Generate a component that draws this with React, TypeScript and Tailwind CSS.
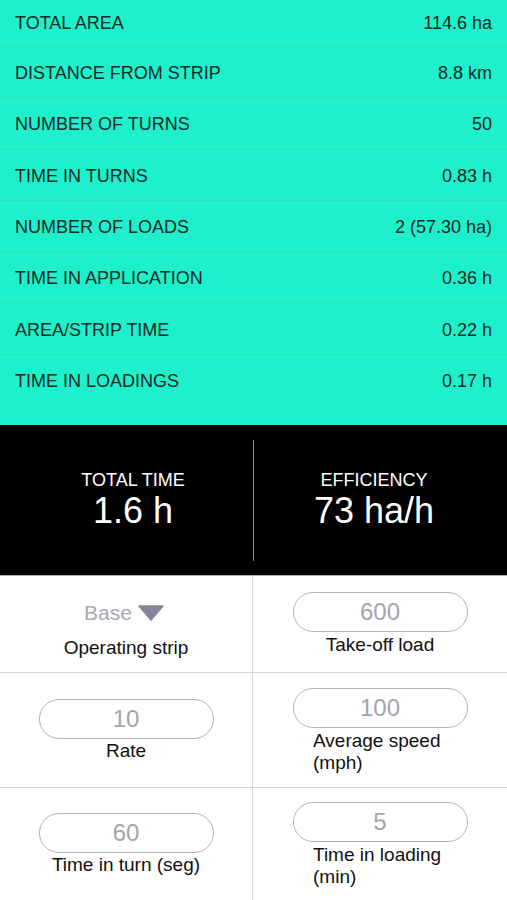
import React from "react";

const rows: [string, string][] = [
  ["TOTAL AREA", "114.6 ha"],
  ["DISTANCE FROM STRIP", "8.8 km"],
  ["NUMBER OF TURNS", "50"],
  ["TIME IN TURNS", "0.83 h"],
  ["NUMBER OF LOADS", "2 (57.30 ha)"],
  ["TIME IN APPLICATION", "0.36 h"],
  ["AREA/STRIP TIME", "0.22 h"],
  ["TIME IN LOADINGS", "0.17 h"],
];

const Pill = ({ value }: { value: string }) => (
  <div className="w-[175px] h-[40px] rounded-full border border-[#b4b4bc] flex items-center justify-center text-[24px] text-[#a4a4b2]">
    {value}
  </div>
);

const Stat = ({ label, value }: { label: string; value: string }) => (
  <div className="flex-1 flex flex-col items-center justify-center text-white">
    <span className="text-[18px] leading-[22px]">{label}</span>
    <span className="text-[36px] leading-[40px]">{value}</span>
  </div>
);

export default function App() {
  return (
    <div className="w-[507px] h-[900px] overflow-hidden bg-white font-['Liberation_Sans',Arial,sans-serif]">
      {/* results */}
      <div className="bg-[#1ff0cc] pb-[19px]">
        {rows.map(([k, v], i) => (
          <div
            key={k}
            className={
              "flex items-center justify-between px-[15px] text-[18px] text-[#0b2a25] " +
              (i === 0 ? "h-[47px] " : "h-[51.3px] pt-[3px] ") +
              (i < rows.length - 1 ? "border-b border-[#3ad9b3]" : "")
            }
          >
            <span>{k}</span>
            <span>{v}</span>
          </div>
        ))}
      </div>

      {/* totals */}
      <div className="bg-black h-[150px] flex items-center px-[13px]">
        <Stat label="TOTAL TIME" value="1.6 h" />
        <div className="w-px h-[121px] bg-[#8a8a8a]" />
        <Stat label="EFFICIENCY" value="73 ha/h" />
      </div>

      {/* inputs */}
      <div className="grid grid-cols-[253px_1fr] border-t border-[#a8a8a8] text-[19px] leading-[22px] text-[#111]">
        <div className="h-[97px] border-r border-b border-[#d6d6d6] flex flex-col items-center pt-[24px]">
          <div className="flex items-center gap-[6px] text-[21px] text-[#a8a8b6] leading-[26px] -ml-[4px]">
            <span>Base</span>
            <svg width="26" height="16" viewBox="0 0 26 16">
              <path d="M1 1 H25 L13 15 Z" fill="#86869a" stroke="#86869a" strokeWidth="1.5" strokeLinejoin="round" />
            </svg>
          </div>
          <span className="mt-[11px]">Operating strip</span>
        </div>
        <div className="h-[97px] border-b border-[#d6d6d6] flex flex-col items-center pt-[16px]">
          <Pill value="600" />
          <span className="mt-[2px]">Take-off load</span>
        </div>

        <div className="h-[115px] border-r border-b border-[#d6d6d6] flex flex-col items-center pt-[26px]">
          <Pill value="10" />
          <span className="mt-[1px]">Rate</span>
        </div>
        <div className="h-[115px] border-b border-[#d6d6d6] flex flex-col items-center pt-[15px]">
          <Pill value="100" />
          <span className="w-[134px] text-left mt-[2px] whitespace-nowrap">
            Average speed
            <br />
            (mph)
          </span>
        </div>

        <div className="h-[113px] border-r border-[#d6d6d6] flex flex-col items-center pt-[25px]">
          <Pill value="60" />
          <span className="mt-[1px]">Time in turn (seg)</span>
        </div>
        <div className="h-[113px] flex flex-col items-center pt-[14px]">
          <Pill value="5" />
          <span className="w-[134px] text-left mt-[2px] whitespace-nowrap">
            Time in loading
            <br />
            (min)
          </span>
        </div>
      </div>
    </div>
  );
}
